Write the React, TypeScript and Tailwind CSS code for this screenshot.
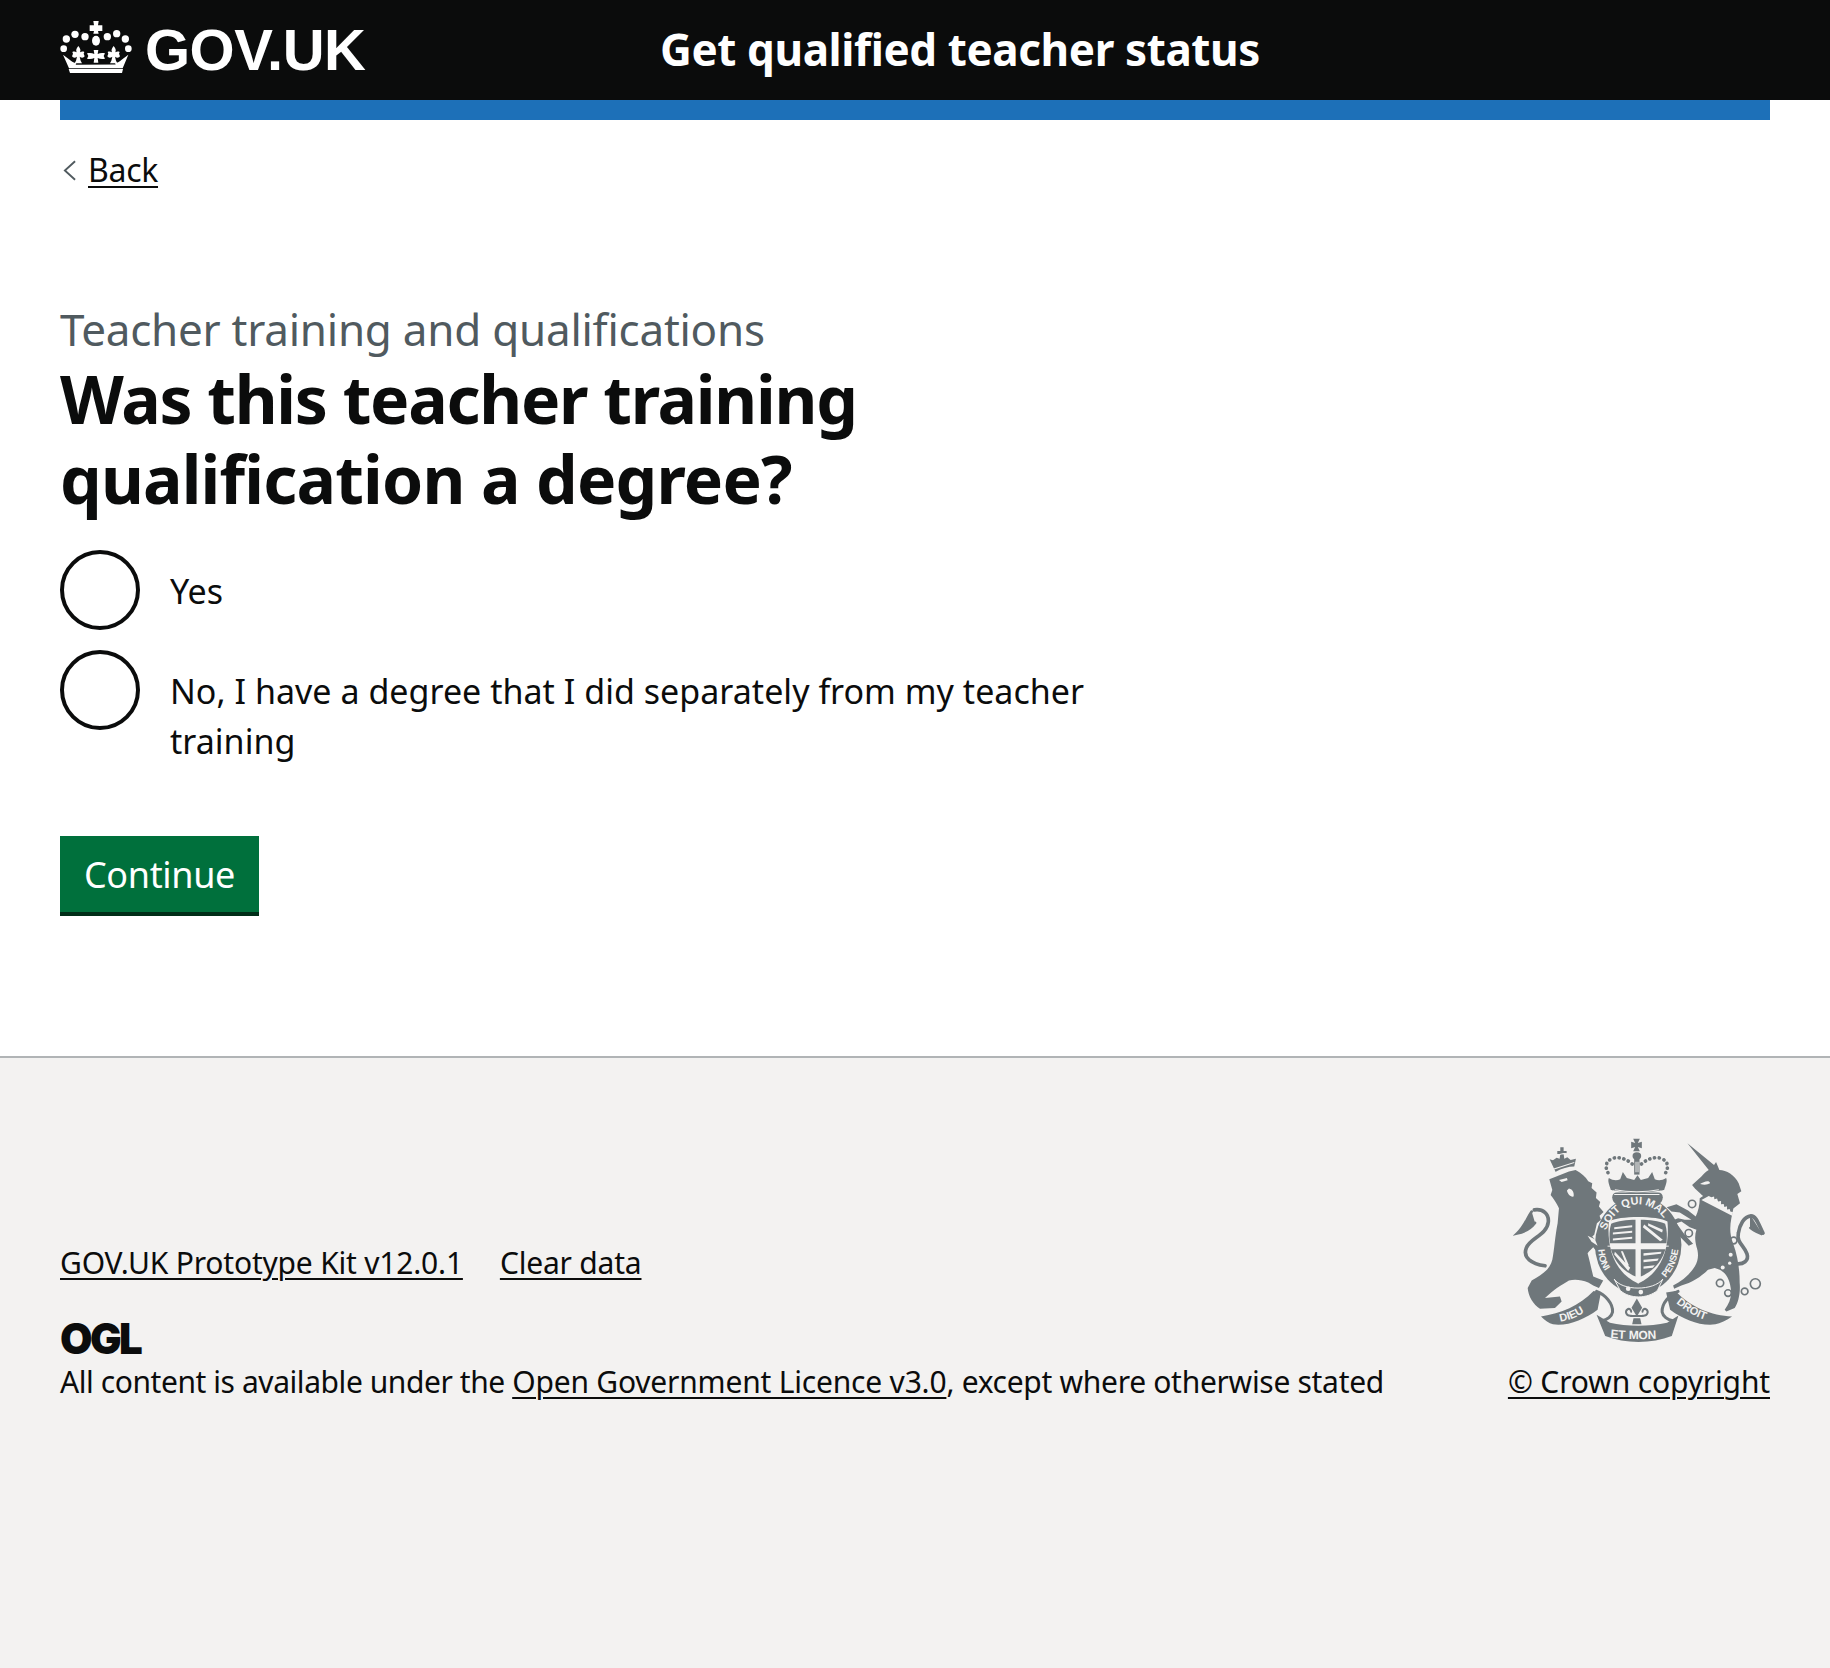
const BG = "#f3f2f1";
const ARM = "#6f777b";

const CrownLogo = () => (
  <svg viewBox="180 65 216 156" className="w-[72px] h-[52px] shrink-0 -mt-[6px]" fill="white">
    {/* pearls */}
    <circle cx="199" cy="119" r="11" />
    <circle cx="225" cy="105" r="11" />
    <circle cx="255" cy="112" r="11" />
    <circle cx="322" cy="112" r="11" />
    <circle cx="350" cy="103" r="11" />
    <circle cx="376" cy="119" r="11" />
    <circle cx="191" cy="148" r="10" />
    <circle cx="385" cy="148" r="10" />
    {/* top cross */}
    <path d="M280 65h16l-2 13h13v17h-13l2 8h-16l2-8h-13V78h13z" />
    <ellipse cx="288" cy="124" rx="12" ry="15" />
    {/* fleurs */}
    <path d="M235 140c6 7 8 13 5 19 5-3 9-3 13-1l-2 5 3 8-3 3c-4 2-8 1-12-2l3 12 4 8h-22l4-8 3-12c-4 3-8 4-12 2l-3-3 3-8-2-5c4-2 8-2 13 1-3-6-1-12 5-19z" />
    <path d="M281 152h14l-2 12c6-3 14-4 22-2l-4 8 4 8c-8 2-16 1-22-2l2 14h-14l2-14c-6 3-14 4-22 2l4-8-4-8c8-2 16-1 22 2z" />
    <path d="M341 140c6 7 8 13 5 19 5-3 9-3 13-1l-2 5 3 8-3 3c-4 2-8 1-12-2l3 12 4 8h-22l4-8 3-12c-4 3-8 4-12 2l-3-3 3-8-2-5c4-2 8-2 13 1-3-6-1-12 5-19z" />
    {/* band and arms */}
    <path d="M189 166l20 15c6 5 12 9 20 11l-2 4 120-.5-2-3.5c8-2 14-6 20-11l20-15-17 41-1 0H207z" />
    <path d="M206 209h163l-3 12H210z" />
  </svg>
);

const RoyalArms = ({ className }: { className: string }) => (
  <svg viewBox="95 48 770 625" className={className} aria-label="Royal coat of arms">
    <g fill={ARM}>
      {/* lion crown */}
      <path d="M222 156l-18-38 10 3 11-8 9 3 2-14h-9v-9h9V82h10v11h9v9h-9l2 14 9-4 10 8 16-4-5 24c-18 0-38 6-57 16z" />
      {/* lion */}
      <path d="M203 178L262 155 282 150C300 160 312 170 320 184L332 190 330 204 345 218 343 234 356 246 352 260 366 276 354 288 358 300 346 310 338 345 332 350 350 370 372 402 362 415 345 395 335 382 322 395 318 400C325 425 330 450 335 470L365 482 352 505 335 497 320 488C300 480 280 478 262 482 240 495 215 510 190 535L235 530 240 545 220 565 175 567C155 555 140 530 138 505L150 482C180 465 205 450 212 420 218 390 220 350 228 310L232 265C225 250 215 235 207 225L212 210z" />
      {/* unicorn */}
      <path d="M618 70L698 135 704 126 714 150C735 150 760 165 772 190L780 214 768 222 776 250 756 266 750 295C745 320 745 345 755 370 770 410 775 450 775 490 778 520 770 550 760 565L735 575 730 570C745 550 752 530 748 505 745 480 735 460 715 450L700 445 680 450C660 470 630 490 600 497L578 507 575 497C600 485 625 465 640 440 652 420 652 400 645 380 640 360 640 345 645 330L625 322 600 305 585 310 610 345 635 372 622 378 590 345 565 305 590 295 610 300 630 300 595 278 570 275 556 262 585 253 620 272 643 290C650 275 655 255 655 235L665 228C650 215 645 210 640 205L632 195 660 170C665 163 672 156 682 150z" />
      {/* crown of the arms */}
      <path d="M455 56h20l-6 13 12-4v20l-12-4 6 13h-20l6-13-12 4V65l12 4z" />
      <path d="M458 100h16v64h-16z" />
      <ellipse cx="466" cy="108" rx="13" ry="11" />
      <path d="M388 210c-6-18-10-28-6-36 12 8 24 8 34 4l8-22 12 18 22 6 10-14 10 14 22-6 12-18 8 22c10 4 22 4 34-4 4 8 0 18-6 36 0 0-40 8-80 8s-80-8-80-8z" />
      <path d="M392 232c0-8 6-14 14-14h124c8 0 14 6 14 14 0 10-6 18-14 22H406c-8-4-14-12-14-22z" />
      {/* garter */}
      <ellipse cx="470" cy="375" rx="130" ry="146" />
      {/* motto ribbon */}
      <path d="M178 590c60-8 115-32 158-76l22 4-10 52c-40 30-90 50-134 44-12-4-24-12-36-24z" />
      <path d="M345 585l40 24c50 12 120 12 172 0l34-22-20 62c-60 24-140 24-200 0z" />
      <path d="M752 590c-60 0-128-30-170-76l-28 4 12 52c40 30 92 50 136 44 14-4 34-12 50-24z" />
      {/* fleur de lis */}
      <path d="M466 536l-16 28 16 26 16-26z" />
      <path d="M446 586h40v6h-40zM456 596h20l4 18h-28z" />
    </g>

    <g fill="none" stroke={ARM} strokeWidth="11" strokeLinecap="round">
      {/* lion tail */}
      <path d="M190 438c-40-6-68-24-56-54 12-30 62-38 66-78 2-24-16-40-42-36" />
      <path d="M150 275c-14 20-22 46-44 66 20-4 40-14 54-32" strokeWidth="8" fill={ARM} />
      {/* unicorn tail */}
      <path d="M755 430c34 8 48-10 42-28-8-24-32-34-26-62 4-24 16-50 38-52 16 0 22 24 36 52" />
      <path d="M806 290c10 14 14 26 36 54-14-6-26-10-36-20" strokeWidth="6" fill={ARM} />
      {/* crown arches */}
      <path d="M452 132c-16-14-40-24-60-16-22 8-24 30-6 52M480 132c16-14 40-24 60-16 22 8 24 30 6 52" strokeDasharray="0.5 14" strokeWidth="11" />
      {/* ribbon folds */}
      <path d="M345 515c26 10 50 36 48 62-2 12-16 24-32 26" strokeWidth="9" />
      <path d="M590 515c-26 10-50 36-48 62 2 12 16 24 32 26" strokeWidth="9" />
      {/* fleur curls */}
      <path d="M449 588c-16 2-20-14-10-20 6-2 10 2 10 8M483 588c16 2 20-14 10-20-6-2-10 2-10 8" strokeWidth="6" />
    </g>

    {/* chain rings */}
    <g fill="none" stroke={ARM} strokeWidth="5">
      <circle cx="632" cy="252" r="11" />
      <circle cx="622" cy="340" r="11" />
      <circle cx="757" cy="362" r="10" />
      <circle cx="716" cy="490" r="11" />
      <circle cx="740" cy="520" r="10" />
      <circle cx="790" cy="515" r="10" />
      <circle cx="822" cy="492" r="15" />
    </g>

    {/* highlights */}
    <g fill={BG}>
      <circle cx="748" cy="405" r="6" />
      <circle cx="724" cy="443" r="6" />
      <circle cx="745" cy="430" r="5" />
      <path d="M660 240l92 48 3-11-8-2-2-8-8 2 0-10-8 2-2-9-8 1v-10l-9 2-3-9-8 2-1-8-8 2-8-4z" />
      <path d="M656 192c10-6 28-14 30-2-8 4-16 6-30 2zM232 180l24-6 2 7-18 5zM262 206c12 2 16 14 14 24-10 2-18-8-20-18z" />
      <path d="M318 348l22 10 8 20-18-12z" />
      <path d="M210 118c16-22 56-26 72-6l-2 3c-16-18-52-16-68 5zM216 146l62-20v3l-60 20z" />
      {/* crown band lines */}
      <path d="M398 222h136v3H398z" />
      <path d="M400 208c40 8 92 8 132 0v3c-40 8-92 8-132 0z" />
      <path d="M462 125h3v32h-3zM468 125h3v32h-3z" />
      {/* shield */}
      <path d="M382 305c30-18 146-18 176 0 6 70-10 150-88 186-78-36-94-116-88-186z" />
    </g>

    {/* quarters */}
    <g fill={ARM}>
      <path d="M389 312c18-8 48-12 73-12v70h-77c-2-20-2-40 4-58z" />
      <path d="M478 300c25 0 55 4 73 12 6 18 6 38 4 58h-77z" />
      <path d="M388 388h74v82c-34-14-62-42-74-82z" />
      <path d="M478 388h74c-12 40-40 68-74 82z" />
    </g>
    <g fill={BG}>
      <path d="M398 322l54-6v6l-54 6zM394 338l58-5v6l-58 5zM394 356l58-5v6l-58 5z" />
      <path d="M488 314l56 46-8 4-52-42zM500 310l44 20-2 8-42-20z" />
      <path d="M400 396l46 48-6 10-42-50zM418 394h6l18 42-6 4z" />
      <path d="M486 400l54-4-2 6-52 6zM486 420l46-4-4 7-42 4zM486 440l34-4-6 8-28 3z" />
    </g>
    <path d="M470 296v195M378 379h184" stroke={BG} strokeWidth="3" fill="none" />
    <path d="M398 478c24 36 118 36 146 0l-16 34c-30 26-84 26-112 0z" fill={ARM} stroke={BG} strokeWidth="3" />
    <circle cx="440" cy="507" r="7" fill={BG} />
    <circle cx="478" cy="517" r="7" fill={BG} />

    {/* motto and garter lettering */}
    <defs>
      <path id="garterTop" d="M368 345c20-60 60-92 102-92s82 32 102 92" />
      <path id="garterLeft" d="M350 385c0 36 14 72 44 90" />
      <path id="garterRight" d="M548 478c24-20 42-60 44-100" />
      <path id="motto1" d="M236 606c40-6 76-26 106-56" />
      <path id="motto2" d="M382 654c50 6 130 6 176 0" />
      <path id="motto3" d="M582 548c36 32 76 52 120 60" />
    </defs>
    <g fill={BG} fontFamily="'Liberation Sans', sans-serif" fontWeight="700" fontSize="33">
      <text><textPath href="#garterTop" startOffset="14">SOIT QUI MAL</textPath></text>
      <text fontSize="28"><textPath href="#garterLeft" startOffset="4">HONI</textPath></text>
      <text fontSize="28"><textPath href="#garterRight" startOffset="6">PENSE</textPath></text>
      <text><textPath href="#motto1" startOffset="0">DIEU</textPath></text>
      <text fontSize="36"><textPath href="#motto2" startOffset="4">ET MON</textPath></text>
      <text><textPath href="#motto3" startOffset="2">DROIT</textPath></text>
    </g>
  </svg>
);

const Radio = ({ children }: { children: React.ReactNode }) => (
  <div className="flex items-start">
    <span className="w-20 h-20 rounded-full border-[4px] border-[#0b0c0c] bg-white shrink-0" />
    <label className="pl-[30px] pt-[16px] text-[34px] leading-[50px] tracking-[0.03px] text-[#0b0c0c] w-[960px]">
      {children}
    </label>
  </div>
);

const linkClass = "underline underline-offset-[4px] decoration-2";

export default function App() {
  return (
    <div className="min-h-[1668px] flex flex-col bg-white font-['Noto_Sans',sans-serif] text-[#0b0c0c]">
      {/* Header */}
      <header className="h-[100px] bg-[#0b0c0c] flex items-center px-[60px] text-white">
        <a href="#" className="flex items-center w-[600px]">
          <CrownLogo />
          <span className="ml-[13px] font-['Liberation_Sans',sans-serif] font-bold text-[58px] leading-none tracking-[-0.5px]">
            GOV.UK
          </span>
        </a>
        <span className="font-bold text-[44px] leading-none tracking-[-0.4px] -mt-[2px]">Get qualified teacher status</span>
      </header>
      <div className="mx-[60px] h-5 bg-[#1d70b8]" />

      {/* Main */}
      <main className="px-[60px] h-[936px] flex flex-col items-start">
        <a href="#" className="mt-[30px] flex items-center text-[32px] leading-10 tracking-[-0.3px]">
          <svg viewBox="0 0 14 22" className="ml-[3px] w-[13px] h-[21px] mr-[12px]" fill="none" stroke="#505a5f" strokeWidth="2">
            <path d="M13 1L2 11l11 10" />
          </svg>
          <span className={linkClass}>Back</span>
        </a>

        <span className="mt-[110px] text-[44px] leading-[58px] tracking-[-0.25px] text-[#505a5f]">Teacher training and qualifications</span>
        <h1 className="font-bold text-[66px] leading-[80px] w-[900px]">
          <span className="block tracking-[-1.25px]">Was this teacher training</span>
          <span className="block tracking-[-0.8px]">qualification a degree?</span>
        </h1>

        <div className="mt-[32px] flex flex-col gap-5">
          <Radio>Yes</Radio>
          <Radio>No, I have a degree that I did separately from my teacher training</Radio>
        </div>

        <button className="mt-[70px] w-[199px] h-20 pt-[2px] bg-[#00703c] border-b-[4px] border-[#002d18] text-white text-[36px] leading-none tracking-[-0.35px]">
          Continue
        </button>
      </main>

      {/* Footer */}
      <footer className="flex-1 bg-[#f3f2f1] border-t-2 border-[#b1b4b6] px-[60px] pt-[78px]">
        <div className="flex justify-between items-end text-[30px]">
          <div>
            <div className="flex gap-[37px] leading-10 tracking-[-0.2px]">
              <a href="#" className={linkClass}>GOV.UK Prototype Kit v12.0.1</a>
              <a href="#" className={linkClass}>Clear data</a>
            </div>
            <div className="mt-[39px] font-['Inter',sans-serif] font-black text-[42px] leading-[34px] tracking-[-2.6px]">OGL</div>
            <p className="mt-[6px] leading-10 tracking-[-0.43px]">
              All content is available under the{" "}
              <a href="#" className={`tracking-[-0.2px] ${linkClass}`}>Open Government Licence v3.0</a>
              <span className="tracking-[-0.3px]">, except where otherwise stated</span>
            </p>
          </div>
          <div className="flex flex-col items-end tracking-[-0.15px]">
            <RoyalArms className="w-[257px] h-[208px] block" />
            <a href="#" className={`mt-[18px] leading-10 ${linkClass}`}>© Crown copyright</a>
          </div>
        </div>
      </footer>
    </div>
  );
}
